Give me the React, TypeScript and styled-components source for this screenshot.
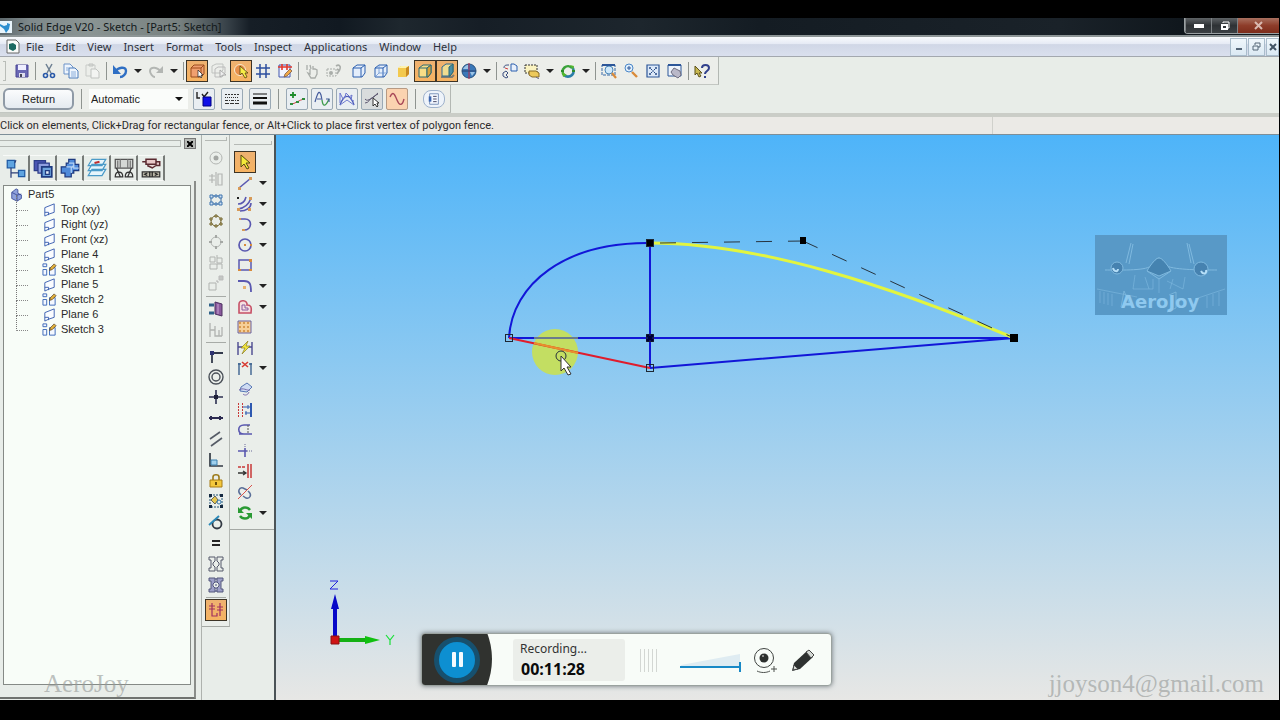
import React from "react";
import styled, { createGlobalStyle, css } from "styled-components";

const UI = `"Noto Sans", "Open Sans", sans-serif`;
const SANS = `"Liberation Sans", Arial, sans-serif`;
const SERIF = `"Liberation Serif", "Times New Roman", serif`;

const Global = createGlobalStyle`
  * { box-sizing: border-box; }
  body { margin: 0; background: #000; overflow: hidden; }
  button { font: inherit; color: inherit; padding: 0; border: 0; background: none; }
  svg { display: block; }
`;

const Screen = styled.div`
  position: relative;
  min-height: 100vh;
  display: flex;
  flex-direction: column;
  padding: 18px 1px 20px 0;
  font-family: ${UI};
  font-size: 11px;
  color: #222;
  background: #000;
`;

const TitleBar = styled.header`
  display: flex;
  align-items: center;
  height: 19px;
  border-bottom: 2px solid #8d9596;
  background: linear-gradient(90deg, #5d686c 0, #7e898b 30px, #8a9493 90px, #77807f 180px, #39434a 226px, #161e26 250px, #111921 340px, #1e272e 400px, #161e26 480px, #1d262d 640px, #141c23 760px, #1a2229 1060px, #10171d 1180px);
`;
const Title = styled.h1`
  flex: 1;
  margin: 0 0 0 6px;
  font-size: 11px;
  line-height: 17px;
  font-weight: 400;
  color: #12181a;
  white-space: nowrap;
`;
const WindowButtons = styled.div`
  display: flex;
  align-self: flex-start;
  height: 16px;
  border: 1px solid #9aa0a2;
  border-top: 0;
  border-right: 0;
  border-radius: 0 0 0 4px;
  overflow: hidden;
`;
const WindowButton = styled.button<{ $close?: boolean }>`
  display: grid;
  place-items: center;
  width: ${(p) => (p.$close ? 42 : 26)}px;
  border-left: 1px solid #7d8285;
  background: ${(p) => (p.$close ? "linear-gradient(#a8705f, #8e3d2a 50%, #7c2c1b)" : "linear-gradient(#5e6366, #2e3235 50%, #3b4043)")};
`;

const MenuBar = styled.nav`
  display: flex;
  align-items: center;
  height: 20px;
  padding-left: 5px;
  border-bottom: 1px solid #a3a8ae;
  background: linear-gradient(#f8fafc, #e6ebf5 35%, #d0d7e6 40%, #dae0ee);
`;
const MenuItem = styled.button`
  padding: 0 6px;
  font-size: 11px;
  line-height: 18px;
  color: #2c313a;
`;
const DocButtons = styled.div`
  display: flex;
  gap: 1px;
  margin-left: auto;
  height: 18px;
`;
const DocButton = styled.button<{ $cut?: boolean }>`
  display: grid;
  place-items: center;
  width: ${(p) => (p.$cut ? 13 : 17)}px;
  overflow: hidden;
  border: 1px solid #a9bccb;
  background: linear-gradient(#f0f7fb, #dbe9f3);
`;

const Strip = styled.div`
  display: flex;
  align-items: center;
  background: #e8ede8;
`;
const ToolRow = styled(Strip)`
  height: 28px;
`;
const ToolSet = styled.div`
  display: flex;
  align-items: center;
  height: 28px;
  padding: 1px 5px 0 3px;
  border-right: 1px solid #b3b8b3;
  border-bottom: 1px solid #c3c7c2;
  background: #eceeea;
`;
const Grip = styled.span`
  width: 3px;
  height: 20px;
  margin-right: 5px;
  border: 1px solid #b9bdb8;
  border-left: 0;
`;
const pressed = css`
  border: 1px solid #3d3426;
  background: linear-gradient(#eeb170, #f6b362);
`;
const ToolButton = styled.button<{ $on?: boolean }>`
  display: grid;
  place-items: center;
  width: 22px;
  height: 22px;
  ${(p) => p.$on && pressed}
`;
const Drop = styled.button`
  width: 14px;
  height: 20px;
  display: grid;
  place-items: center;
  &::after {
    content: "";
    border: 4px solid transparent;
    border-bottom: 0;
    border-top-color: #222;
  }
`;
const Sep = styled.span`
  width: 1px;
  height: 18px;
  margin: 0 2px;
  background: #8f9490;
`;
const Space = styled.span`
  width: 3px;
`;

const ReturnButton = styled.button`
  width: 71px;
  height: 22px;
  border: 2px solid #8f9aa6;
  border-radius: 6px;
  background: linear-gradient(#fbfcfd, #e4eaf0);
  font-family: ${SANS};
  font-size: 11px;
  color: #222;
`;
const StyleSelect = styled.select`
  width: 99px;
  height: 20px;
  padding: 0 0 0 2px;
  border: 0;
  border-radius: 0;
  appearance: none;
  font-family: ${SANS};
  font-size: 11px;
  color: #222;
  background: #fafcfa;
`;
const SelectWrap = styled.label`
  position: relative;
  display: flex;
  margin-right: 5px;
  &::after {
    content: "";
    position: absolute;
    right: 5px;
    top: 8px;
    border: 4px solid transparent;
    border-bottom: 0;
    border-top-color: #111;
    pointer-events: none;
  }
`;
const BoxRow = styled.div<{ $gap: number }>`
  display: flex;
  gap: ${(p) => p.$gap}px;
`;
const BoxButton = styled.button<{ $tone?: "gray" | "orange" | "round" }>`
  display: grid;
  place-items: center;
  width: 22px;
  height: 22px;
  border: 1px solid #9aa9b5;
  border-radius: 2px;
  background: #e9eef2;
  ${(p) => p.$tone === "gray" && "background: #d9dcdd;"}
  ${(p) => p.$tone === "orange" && "background: #fbd3b0; border-color: #b79a83;"}
  ${(p) => p.$tone === "round" && "border-radius: 8px; height: 18px; background: #eef3fa; border-color: #9fb2cc;"}
`;
const ToolSep = styled.span`
  width: 1px;
  height: 20px;
  margin: 0 7px;
  background: #8f9490;
`;

const Prompt = styled.p`
  display: flex;
  margin: 0;
  height: 22px;
  border-top: 4px solid #cacdc7;
  border-bottom: 1px solid #7d8e98;
  background: #ebeae6;
  font-family: Roboto, ${UI};
  line-height: 17px;
  font-size: 11px;
  color: #2b2b2b;
  white-space: nowrap;
  span { flex: 1; }
  &::after {
    content: "";
    width: 286px;
    border-left: 1px solid #d0d1cc;
  }
`;

const Work = styled.main`
  flex: 1;
  display: flex;
  background: #e8ede9;
`;
const EdgeBar = styled.aside`
  width: 202px;
  padding-right: 5px;
  display: flex;
  flex-direction: column;
  border-right: 1px solid #aeb2ae;
`;
const EdgeHead = styled.div`
  display: flex;
  align-items: center;
  gap: 3px;
  height: 17px;
  &::before {
    content: "";
    flex: 1;
    height: 5px;
    border: 1px solid #b2b6b2;
    border-left: 0;
  }
`;
const CloseBox = styled.button`
  width: 12px;
  height: 11px;
  display: grid;
  place-items: center;
  background: #b7bab6;
  border: 1px solid #777;
`;
const Tabs = styled.div`
  display: flex;
  padding: 3px 0 0 3px;
`;
const Tab = styled.button<{ $on?: boolean }>`
  display: grid;
  place-items: center;
  width: 27px;
  height: 26px;
  border-top: 1px solid #f8faf8;
  border-right: 2px solid #777b78;
  border-bottom: ${(p) => (p.$on ? "0" : "1px solid #f8faf8")};
`;
const TabPanel = styled.section`
  flex: 1;
  display: flex;
  margin-bottom: 1px;
  padding: 4px 3px 12px 3px;
  border-right: 2px solid #8a8d8a;
  border-bottom: 2px solid #6f726f;
`;
const Tree = styled.ul`
  flex: 1;
  margin: 0;
  padding: 1px 0 0 6px;
  list-style: none;
  border: 1px solid #858a86;
  background: #f8fdf8;
  font-family: ${SANS};
  font-size: 11px;
  line-height: 15px;
  color: #2a2a2a;
  ul { margin: 0; padding: 0; list-style: none; }
`;
const TreeRoot = styled.div`
  display: flex;
  align-items: center;
  gap: 4px;
  height: 15px;
`;
const TreeItem = styled.li`
  position: relative;
  display: flex;
  align-items: center;
  gap: 4px;
  height: 15px;
  padding-left: 32px;
  &::before {
    content: "";
    position: absolute;
    left: 6px;
    top: -7px;
    width: 11px;
    height: 15px;
    border-left: 1px dotted #777;
    border-bottom: 1px dotted #888;
  }
`;

const Palette = styled.div<{ $wide?: boolean }>`
  align-self: flex-start;
  display: flex;
  flex-direction: column;
  width: ${(p) => (p.$wide ? 44 : 28)}px;
  height: ${(p) => (p.$wide ? 395 : 492)}px;
  padding: ${(p) => (p.$wide ? "6px 2px 6px 4px" : "2px 2px 5px 3px")};
  border-right: ${(p) => (p.$wide ? 0 : 1)}px solid #b3b7b3;
  border-bottom: 1px solid #a5a9a5;
  background: #eaeeea;
  &::before {
    content: "";
    height: 3px;
    margin-bottom: 7px;
    border: 1px solid #b5b9b5;
    border-left: 0;
    border-top: 0;
  }
`;
const PaletteRow = styled.div`
  flex: 1;
  min-height: 0;
  display: flex;
  align-items: center;
`;
const PaletteSep = styled.span`
  height: 1px;
  margin: 2px 1px;
  background: #a7aba7;
`;

const Canvas = styled.section`
  position: relative;
  flex: 1;
  overflow: hidden;
  border-left: 2px solid #4b5357;
  background: linear-gradient(#4eb4f9, #e7e7e5);
`;
const Drawing = styled.svg`
  position: absolute;
  left: 0;
  top: 0;
`;
const Logo = styled.div`
  position: absolute;
  right: 52px;
  top: 100px;
  width: 132px;
  height: 80px;
  background: #5899c7;
`;
const LogoText = styled.span`
  position: absolute;
  left: 26px;
  bottom: 3px;
  font-family: "DejaVu Sans", sans-serif;
  font-weight: 700;
  font-size: 18px;
  line-height: 20px;
  color: #8fc9ef;
`;
const Axis = styled.div`
  position: absolute;
  left: 52px;
  bottom: 50px;
`;

const Recorder = styled.div`
  position: absolute;
  left: 145px;
  bottom: 14px;
  display: flex;
  align-items: center;
  width: 411px;
  height: 53px;
  border: 1px solid #9aa29f;
  border-radius: 4px;
  background: #f8fcf8;
  box-shadow: 0 0 5px #6d7579;
  overflow: hidden;
`;
const RecordLeft = styled.div`
  display: flex;
  align-items: center;
  width: 70px;
  height: 53px;
  padding-left: 12px;
  background: #30322f;
  clip-path: circle(72px at -2px 26px);
`;
const Pause = styled.button`
  display: flex;
  justify-content: center;
  align-items: center;
  gap: 3px;
  width: 46px;
  height: 46px;
  border: 5px solid #17506e;
  border-radius: 50%;
  background: #0d8fd1;
  i { width: 4px; height: 15px; background: #f4fbff; border-radius: 1px; }
`;
const RecordInfo = styled.div`
  width: 112px;
  height: 42px;
  margin-left: 21px;
  padding: 1px 7px;
  border-radius: 3px;
  background: #ebeeea;
  white-space: nowrap;
`;
const RecordLabel = styled.div`
  font-size: 12px;
  line-height: 17px;
  color: #333;
`;
const RecordTime = styled.div`
  margin-left: 1px;
  font-family: "Open Sans", ${UI};
  font-size: 16px;
  line-height: 24px;
  font-weight: 700;
  color: #0a0a0a;
`;
const Mark = styled.div<{ $right?: boolean }>`
  position: absolute;
  bottom: 22px;
  ${(p) => (p.$right ? "right: 16px;" : "left: 44px;")}
  font-family: ${SERIF};
  font-size: 25px;
  line-height: 28px;
  color: rgba(150, 154, 152, 0.62);
`;

const B = "#2b5fae";
const P = "#5a58b0";
const G = "#a9ada9";
const cube = "M2 5l4-3h8v8l-3 4H2zM2 5h8v9M10 5l4-3";
const bracket = "M1 1h6v4L5 7v2l2 2v4H1v-3h2V4H1zM15 1H9v4l2 2v2l-2 2v4h6v-3h-2V4h2z";

const ICONS: Record<string, React.ReactNode> = {
  save: <><path d="M2 2h12v12H2z" fill="#6a68b4" stroke="#4a4795" /><path d="M4 2h8v5H4z" fill="#eef" /><path d="M5 10h6v4H5z" fill="#dde" /><path d="M6 11h2v3H6z" fill="#445" /></>,
  cut: <><path d="M5 1l5 9M11 1L6 10" stroke="#6d7f92" strokeWidth="1.5" /><circle cx="4.5" cy="12.5" r="2" stroke="#2858a8" strokeWidth="1.6" /><circle cx="11.5" cy="12.5" r="2" stroke="#2858a8" strokeWidth="1.6" /></>,
  copy: <><path d="M1 1h6l3 3v7H1z" fill="#eef5fd" stroke="#6d93c8" /><path d="M6 5h6l3 3v7H6z" fill="#eef5fd" stroke="#4d7cba" /><path d="M8 9h5M8 11h5M8 13h5M3 5h3M3 7h3" stroke="#8aaedb" /></>,
  paste: <><path d="M1 2h9v11H1z" stroke="#c8cbc8" /><path d="M4 1h4v2H4z" stroke="#c0c3c0" /><path d="M6 6h5l3 3v6H6z" fill="#f3f4f2" stroke="#c0c3c0" /></>,
  undo: <><path d="M3 9c3-5 11-6 11-1 0 3-3 6-6 6" stroke="#2f6fc4" strokeWidth="2.4" /><path d="M1 2v9h8z" fill="#2f6fc4" /></>,
  redo: <><path d="M13 9C10 4 2 3 2 8c0 3 3 6 5 6" stroke="#b3b6b3" strokeWidth="2" /><path d="M15 3v7H8z" fill="#b3b6b3" /></>,
  selbox: <><path d="M2 5l3-3h10v9l-3 3H2z" fill="#f0a070" stroke="#9b4c1e" /><path d="M2 5h10v9M12 5l3-3" stroke="#a04a18" /><path d="M9 7v7l2-1 1 2 1-1-1-2h2z" fill="#fff" stroke="#222" strokeWidth=".7" /></>,
  ghostbox: <><path d="M1 3l4-2h7v6l-3 3H1z" stroke="#c0c3c0" /><path d="M4 6l3-2h7v6l-3 4H4z" stroke="#bbb" /><path d="M9 7v7l3-2h3z" fill="#eee" stroke="#aaa" /></>,
  spark: <><circle cx="7" cy="7" r="5.500" stroke="#f7ead0" fill="#e78f4a" /><path d="M7 3v9l2-2 3 5 2-1-2-4h3z" fill="#f6ed48" stroke="#54430e" strokeWidth=".8" /></>,
  grid: <path d="M5 1v14M11 1v14M1 5h14M1 11h14" stroke="#2d4f9e" strokeWidth="1.5" />,
  calpen: <><path d="M2 2h11v12H2z" fill="#f3f5ff" stroke="#4356ae" /><path d="M1 4h14M5 1v6M10 1v6" stroke="#e0392e" strokeWidth="1.6" /><path d="M7 14l1-3 5-5 2 2-5 5z" fill="#f0a848" stroke="#7c5c48" strokeWidth=".8" /></>,
  hand: <path d="M3 2v5M6 6v5l-2-1 3 5h4l2-4V7l-2-1-2 0V3M6 2l1 4" stroke={G} strokeWidth="1.3" />,
  camera: <><path d="M1 6h9v7H1z" stroke={G} strokeDasharray="2 1" /><circle cx="5" cy="10" r="2" fill={G} /><path d="M10 3c3-2 5 0 4 3l-3 5M11 6l3 2" stroke={G} strokeWidth="1.6" /></>,
  wire: <path d={cube} stroke={B} fill="#e4eefb" />,
  wire2: <><path d={cube} stroke={B} fill="#e4eefb" /><path d="M6 2v8l-4 4M6 10h8" stroke="#6b96d2" strokeWidth=".8" /></>,
  shade: <><path d="M3 5l3-2h8v8l-3 3H3z" fill="#f3c94d" /><path d="M3 5l3-2h8l-3 2z" fill="#fdf2ae" /><path d="M11 5l3-2v8l-3 3z" fill="#c98a20" /></>,
  shadeOn: <><path d={cube} fill="#f8dd86" stroke="#2c6a74" /><path d="M10 5l4-3v8l-3 4h-1z" fill="#d8a23a" stroke="#2c6a74" /></>,
  shadeOn2: <><path d="M2 14h11l2-2" stroke="#7d7b71" strokeWidth="2" /><path d="M3 4l4-3h7v8l-3 4H3z" fill="#f0dc90" stroke="#2c6a94" /><path d="M10 4l4-3v8l-3 4h-1z" fill="#4a8ea6" stroke="#2c6a74" /></>,
  globe: <><circle cx="8" cy="8" r="7" fill="#3a78b8" stroke="#28527e" /><path d="M2 6c2-4 5-4 5-4v4zM9 9h5l-3 4z" fill="#9cc4e6" /><path d="M8 0v16" stroke="#c02848" /><path d="M1 8h14" stroke="#28406e" /></>,
  swap: <><path d="M9 1h3l3 2v5H9z" stroke={B} fill="#e8f0fb" /><path d="M2 5c0-3 2-3 5-3M1 10l3-2 2 2-2 2 2 2-2 1-3-2z" stroke="#3b4f80" /><path d="M3 5l3 1" stroke="#d04040" /></>,
  tagsel: <><path d="M1 2h12v8H1z" stroke="#333" strokeDasharray="2 1" fill="#faf3c0" /><path d="M5 8h7l3 2v4H8L5 12z" fill="#edc95a" stroke="#876a28" /><path d="M12 14l3 2" stroke="#668" /></>,
  ring: <><path d="M4 12a5 5 0 018-7" stroke="#3aa33a" strokeWidth="2.6" /><path d="M12 4a5 5 0 01-8 8" stroke="#2c7ea8" strokeWidth="2.6" /><path d="M10 2l4 1-1 4zM2 9l1 5 4-2z" fill="#54b82c" /><path d="M1 8h3M12 8h3" stroke="#2d8c2d" strokeWidth="2" /></>,
  zoomArea: <><path d="M1 2h13v10H1z" stroke="#3568a8" strokeDasharray="3 1" /><circle cx="8" cy="7" r="4" fill="#cfe8fa" stroke="#4a86b8" /><path d="M11 10l4 5" stroke="#d98b3a" strokeWidth="2.2" /><path d="M1 2h13" stroke="#2c5698" strokeWidth="2" /></>,
  zoom: <><circle cx="6" cy="5" r="4" fill="#e0effc" stroke="#4a86c8" /><path d="M6 3v4M4 5h4" stroke="#2c5698" /><path d="M9 9l5 5" stroke="#d98b3a" strokeWidth="2.4" /></>,
  fit: <><path d="M2 2h12v12H2z" fill="#dbe8f8" stroke="#2c5698" strokeWidth="1.2" /><path d="M4 5h2M5 4v2M10 5h2M11 4v2M4 11h2M5 10v2M10 11h2M11 10v2M7 8h2M6 6l1 1M10 6L9 7M6 10l1-1M10 10L9 9" stroke="#274a84" /></>,
  pan: <><path d="M1 2h13v11H1z" fill="#edf3fb" stroke="#2c5698" /><path d="M1 2h13" stroke="#2c5698" strokeWidth="2" /><path d="M4 9l3-4 6 3 1 4-3 3-5-3z" fill="#b9b8c8" stroke="#6d6d80" /></>,
  help: <><path d="M1 3v9l2-2 2 4 2-1-2-3h3z" fill="#c8b850" stroke="#5d531c" /><path d="M8 5c0-4 7-4 7 0 0 3-4 3-4 6M11 13v2" stroke="#31408c" strokeWidth="2" /></>,
  layer: <><path d="M1 1v6h3M6 3l3 4M12 1l-4 5" stroke="#222" strokeWidth="1.4" /><path d="M7 6h8v9H7z" fill="#1010e8" stroke="#000080" /></>,
  dashes: <><path d="M1 3.500h14" stroke="#333" strokeDasharray="2 1" /><path d="M1 6.500h14" stroke="#333" strokeDasharray="1 1" /><path d="M1 9.500h14" stroke="#333" strokeDasharray="3 1 1 1" /><path d="M1 12.500h14" stroke="#333" strokeDasharray="4 1" /></>,
  lines: <><path d="M1 3h14" stroke="#111" /><path d="M1 7h14" stroke="#111" strokeWidth="2" /><path d="M1 12h14" stroke="#111" strokeWidth="3" /></>,
  addpt: <><path d="M4 1v6M1 4h6" stroke="#1e8c2c" strokeWidth="1.8" /><path d="M2 13c4 0 8-4 13-5" stroke="#c44" /><path d="M1 12h3v2H1zM7 10h3v2H7zM13 7h3v2h-3z" fill="#2f8c3c" /></>,
  curveA: <><path d="M8 9c1 8 4 6 7-1" stroke="#3c9a4a" strokeWidth="1.3" /><path d="M1 11C4 1 5-1 7 4l1 5M3 8l4 0M12 8h3v3" stroke="#445b9c" strokeWidth="1.2" /></>,
  comb: <><path d="M1 14C5 3 11 2 15 14" stroke="#4c5cb8" strokeWidth="1.4" /><path d="M4 8L1 2v10M4 8l3-4M6 6l1-4 4 4M10 6l3-2-1 5 3 1M1 14l7-5 7 5" stroke="#6d78d0" /></>,
  curveSel: <><path d="M1 12c4 0 4-4 7-5s3-3 6-5M1 8c3 4 8-3 13-5" stroke="#5c5670" /><path d="M9 7v8l2-2 2 3 1-1-1-3h2z" fill="#fff" stroke="#333" /></>,
  wave: <path d="M1 6C4-1 6 4 8 9s5 7 7-1" stroke="#a84858" strokeWidth="1.4" />,
  list: <><path d="M3 2h10v12H3z" fill="#f4f8ff" stroke="#7089b4" /><path d="M7 5h4M7 8h4M7 11h4" stroke="#335" /><path d="M2 5h3v6H2z" fill="#3c66b0" /></>,
  part: <><path d="M2 5l5-4 2 1v4l4 2v4l-5 3-6-3z" fill="#8fa2dc" stroke="#3b4c98" /><path d="M8 8v7M2 5l6 3 5-1" stroke="#3b4c98" /></>,
  plane: <path d="M3 6l10-4v9l-6 2-4 2zM3 11h4v3" stroke="#3b5fb0" fill="#fafcff" />,
  sketch: <><path d="M1 2h4v3H1zM1 8h4v6H1zM8 6h6v8H8z" stroke="#3b68b8" fill="#f4f8ff" /><path d="M8 9l1-3 4-4 2 2-4 4z" fill="#e3b23a" stroke="#5b4220" strokeWidth=".8" /></>,
  circ2g: <><circle cx="8" cy="8" r="6" stroke="#b3b6b3" /><circle cx="8" cy="8" r="2.5" fill="#a3a6a3" /></>,
  mirrorg: <path d="M1 5h6M1 9h6M4 3v9M8 1v14M10 3h4v11h-4z" stroke="#b3b6b3" strokeWidth="1.2" />,
  rectpat: <><path d="M3 4h10v8H3z" stroke="#3a6aa0" /><path d="M2 3h3v3H2zM7 3h2v2H7zM11 3h3v3h-3zM2 10h3v3H2zM7 11h2v2H7zM11 10h3v3h-3z" fill="#cfe0f2" stroke="#3f74ae" /></>,
  circpat: <><circle cx="8" cy="8" r="5" stroke="#7a6a30" /><path d="M7 2h2v2H7zM7 12h2v2H7zM2 5h2v2H2zM12 5h2v2h-2zM2 10h2v2H2zM12 10h2v2h-2z" fill="#f4edc0" stroke="#6d5e28" /></>,
  circg: <><circle cx="8" cy="8" r="5" stroke="#b0b3b0" /><path d="M8 1v3M8 12v3M1 8h3M12 8h3" stroke="#a5a8a5" strokeWidth="2" /></>,
  movg: <path d="M2 3h5v5H2zM9 1v8h5V4H9M2 10h7v5H2zM9 10h5v5" stroke="#b0b3b0" />,
  scaleg: <><path d="M1 8h7v7H1z" stroke="#b0b3b0" /><path d="M11 1h4v4h-4zM8 6h2v2" stroke="#bbb" fill="#c4c7c4" /></>,
  stretch: <><path d="M7 1l7 2v12l-7-2z" fill="#8a5a9c" stroke="#4d3060" /><path d="M1 4h5M1 12h5" stroke="#2e6088" strokeWidth="3" /><path d="M10 3v10" stroke="#c9a6d4" /></>,
  dimg: <path d="M2 1v14M2 8h5M7 4v10h7M11 8v6M14 5v9" stroke="#b0b3b0" strokeWidth="1.3" />,
  connect: <><path d="M4 15V5h11" stroke="#333a4c" strokeWidth="1.8" /><path d="M2 3h4v4H2z" fill="#2c3170" /></>,
  concentric: <><circle cx="8" cy="8" r="7" stroke="#4a5058" strokeWidth="1.4" /><circle cx="8" cy="8" r="4" stroke="#4a5058" strokeWidth="1.4" /></>,
  hv: <><path d="M8 1v14M1 8h14" stroke="#2c2f50" strokeWidth="1.6" /><path d="M6 6h4v4H6z" fill="#1e2038" /></>,
  collin: <path d="M1 8h14M3 6v4M12 6v4M4 7v2M13 7v2" stroke="#2c2a50" strokeWidth="2" />,
  parallel: <><path d="M2 8l10-7" stroke="#555b66" strokeWidth="1.6" /><path d="M3 15l11-8" stroke="#555b66" strokeWidth="1.6" /></>,
  perp: <><path d="M2 1v13h13" stroke="#333a44" strokeWidth="1.7" /><path d="M3 8h6v5H3z" fill="#9fd0ee" stroke="#3b80b0" /></>,
  lock: <><path d="M5 7V4c0-3 6-3 6 0v3" stroke="#9c7a18" strokeWidth="1.6" /><path d="M2 7h12v7H2z" fill="#f4c83c" stroke="#a87c14" /><path d="M8 9v3" stroke="#6b4e08" strokeWidth="2" /></>,
  rigid: <><path d="M2 2h12v12H2z" stroke="#257" strokeDasharray="2 1" /><path d="M1 1h3v3H1zM12 1h3v3h-3zM1 12h3v3H1zM12 12h3v3h-3z" fill="#142840" /><path d="M3 7l4-4 3 4-3 4z" fill="#e8c850" stroke="#665" /><circle cx="11" cy="9" r="2" stroke="#37a" /></>,
  tangent: <><circle cx="9" cy="10" r="4.5" stroke="#333a44" strokeWidth="1.8" /><path d="M1 11L11 2" stroke="#2b88b8" strokeWidth="1.8" /></>,
  equal: <path d="M4 6h8M4 10h8" stroke="#222" strokeWidth="2.2" />,
  sym: <path d={bracket} stroke="#55586a" />,
  symax: <><path d={bracket} fill="#9d9fc8" stroke="#55587c" /><path d="M8 1v14" stroke="#44487c" strokeDasharray="2 1" /></>,
  rel: <path d="M4 1v13h5v-3M1 4h6M1 7h6M12 1v13M9 5h6M9 8h6" stroke="#a03060" strokeWidth="1.2" />,
  arrow: <path d="M4 1v12l3-3 3 5 2-1-3-5h4z" fill="#f4ea3a" stroke="#554a10" />,
  line: <><path d="M2 13L14 3" stroke={P} strokeWidth="1.6" /><path d="M1 12h3v3H1zM12 2h3v3h-3z" fill="#d79a58" /></>,
  curve: <><path d="M1 13C8 12 12 8 14 2M1 8c5 0 7-3 8-7M3 15c6 0 11-3 11-8" stroke={P} strokeWidth="1.6" /><path d="M0 12h3v3H0zM12 1h3v3h-3zM11 12h3v3h-3z" fill="#d79a58" /><path d="M0 1h2v2H0z" fill="#222" /></>,
  arc: <><path d="M3 3h5c8 0 7 11-1 11" stroke={P} strokeWidth="1.7" /><path d="M2 2h2v2H2zM5 13h3v2H5z" fill="#d79a58" /></>,
  circle: <><circle cx="8" cy="8" r="6" stroke={P} strokeWidth="1.7" /><path d="M7 7h2v2H7zM13 7h2v2h-2z" fill="#d88a3a" /></>,
  rect: <><path d="M2 3h12v10H2z" stroke={P} strokeWidth="1.5" /><path d="M1 12h3v2H1zM12 2h3v3h-3zM12 12h3v2h-3z" fill="#d88a3a" /></>,
  fillet: <><path d="M1 3h6c6 0 7 3 7 11" stroke={P} strokeWidth="1.8" /><path d="M6 8h3v3H6z" fill="#e6b070" /></>,
  offset: <><path d="M2 14V5c0-5 9-4 8 1 4 0 5 2 4 8z" stroke="#c65066" strokeWidth="1.6" fill="#f6dfe0" /><path d="M5 11V6h3v3h3v2z" stroke="#8a5ca0" /></>,
  fill: <><path d="M1 2h13v12H1z" fill="#f6cf98" stroke="#6b62a0" /><path d="M2 4h11M2 8h11M2 12h11" stroke="#d99a50" strokeDasharray="2 2" strokeWidth="2" /></>,
  smart: <><path d="M1 2v13M15 2v13M1 7h14" stroke="#4c4a90" strokeWidth="1.4" /><path d="M11 1L4 8h4l-3 6 8-8H9z" fill="#f1e640" stroke="#8a7c1c" strokeWidth=".7" /></>,
  dist: <><path d="M2 3v12M14 3v12M1 4h3M12 4h3" stroke="#3d6390" strokeWidth="1.4" /><path d="M5 2l6 5M11 2L5 7" stroke="#d83a32" strokeWidth="1.6" /></>,
  convert: <><path d="M4 6l6-4 5 4-5 5-7-1z" fill="#cfdcf2" stroke="#5676b4" /><path d="M2 9c4-3 8 1 11 0M6 13c2 2 5 1 6-2" stroke="#7a6cae" /></>,
  trim: <><path d="M1.500 1v14M5.500 1v14" stroke="#c83838" strokeDasharray="2 1" /><path d="M14 1v14" stroke="#2d58b0" strokeWidth="2" /><path d="M6 5h7M8 11h6M11 3v4M9 9v4" stroke="#2d58b0" /></>,
  symrel: <><path d="M13 3H7c-7 0-7 9 0 9h8M2 12h4" stroke={P} strokeWidth="1.6" /><path d="M11 3v9" stroke="#555" strokeDasharray="2 1" /></>,
  extend: <><path d="M1 8h9M8 5v9" stroke={P} strokeWidth="1.6" /><path d="M10 8h5M8 1v4" stroke="#6a6a9a" strokeDasharray="1 1" /></>,
  align: <><path d="M11 1v14M14 1v14" stroke="#c83838" strokeWidth="1.5" /><path d="M1 4h8" stroke="#c83838" strokeDasharray="3 1" strokeWidth="1.6" /><path d="M1 10h8M6 8l3 2-3 2" stroke="#333" strokeWidth="1.3" /></>,
  del: <><path d="M4 11c-4-3-2-8 2-7l4 2M6 12l3 2c4 1 6-3 3-6l-1-1" stroke="#5a6e98" strokeWidth="1.5" /><path d="M1 15L15 1" stroke="#d8514a" /></>,
  refresh: <><path d="M3 6c2-5 8-4 10-1M13 10c-2 5-8 4-10 1" stroke="#2a9a34" strokeWidth="2.4" /><path d="M1 2v6h6zM15 14V8H9z" fill="#2a9a34" /></>,
  tabTree: <><path d="M1 1h6v6H1zM10 9h5v5h-5z" fill="#5fa4e0" stroke="#1f5aa4" /><path d="M7 3l1-2M4 7v8M4 11h6" stroke="#2c3f78" /></>,
  tabLib: <><path d="M1 2h9v8H1z" fill="#4b56b4" stroke="#2b3c88" /><path d="M4 4h9v8H4z" fill="#8f9fe0" stroke="#2b3c88" /><path d="M7 7h8v8H7z" fill="#6fa4dc" stroke="#1e3a80" strokeWidth="1.4" /><path d="M10 10h3v3h-3z" fill="#e4effa" stroke="#1e3a80" /></>,
  tabFam: <><path d="M7 1h5v4h3v5h-4v2H9v3H4v-3H1V7h4V4h2z" fill="#4f8ada" stroke="#1e3a80" /><path d="M5 7h4v5M7 4h4v4h4M9 8l2-2" stroke="#b4d2f4" /></>,
  tabLay: <><path d="M4 1h11l-3 5H1zM4 5h11l-3 5H1zM4 9h11l-3 5H1z" fill="#e6f5fc" stroke="#4a9ac8" /><path d="M6 4l4-1" stroke="#c03030" strokeWidth="1.5" /></>,
  tabSen: <><path d="M1 1h14v7H1z" fill="#d5d8d5" stroke="#555" /><path d="M5 1v7M11 1v7M3 2v6M13 2v6" stroke="#777" /><path d="M1 15c0-5 6-5 6 0zM9 15c0-5 6-5 6 0zM2 8l3 7M14 8l-3 7" stroke="#333" /></>,
  tabPlay: <><path d="M4 1h8v4H4zM1 3h3M12 3h3v3h-3M5 6l4 2 3-2" stroke="#5a2a30" strokeWidth="1.2" fill="#e8c8c8" /><path d="M1 11h14v4H1z" fill="#bbb8a8" stroke="#333" /><path d="M5 12l-2 1 2 1M11 12l2 1-2 1M7 11v4M9 11v4" stroke="#222" /></>,
};

const Icon = ({ name, size = 16 }: { name: string; size?: number }) => (
  <svg width={size} height={size} viewBox="0 0 16 16" fill="none" aria-hidden="true">
    {ICONS[name]}
  </svg>
);

const PRESSED = new Set(["selbox", "spark", "shadeOn", "shadeOn2", "arrow", "rel"]);
const MAIN_TOOLS = "save | cut copy paste | undo v redo v | selbox ghostbox spark grid calpen | hand camera _ wire wire2 shade shadeOn shadeOn2 globe v | swap tagsel v ring v | zoomArea zoom fit pan | help".split(" ");
const RELATIONS = "circ2g mirrorg rectpat circpat circg movg scaleg | stretch dimg | connect concentric hv collin parallel perp lock rigid tangent equal sym symax | rel".split(" ");
const DRAW: [string, boolean?][] = [
  ["arrow"], ["line", true], ["curve", true], ["arc", true], ["circle", true], ["rect"], ["fillet", true], ["offset", true], ["fill"],
  ["smart"], ["dist", true], ["convert"], ["trim"], ["symrel"], ["extend"], ["align"], ["del"], ["refresh", true],
];
const MENUS = ["File", "Edit", "View", "Insert", "Format", "Tools", "Inspect", "Applications", "Window", "Help"];
const TREE = ["Top (xy)", "Right (yz)", "Front (xz)", "Plane 4", "Sketch 1", "Plane 5", "Sketch 2", "Plane 6", "Sketch 3"];
const TABS = ["tabTree", "tabLib", "tabFam", "tabLay", "tabSen", "tabPlay"];

const Handle = ({ x, y, solid }: { x: number; y: number; solid?: boolean }) => (
  <rect x={x - 3.5} y={y - 3.5} width="7" height="7" fill={solid ? "#000" : "none"} stroke="#1d2733" />
);

export default function App() {
  return (
    <Screen>
      <Global />
      <TitleBar>
        <svg width="12" height="14" viewBox="0 0 12 14" aria-hidden="true">
          <path d="M0 1h12v12H0z" fill="#e9f5fc" />
          <path d="M0 4l4 2 3-1V3l3 1-1 5-3 4-2-4-4-3z" fill="#2c8fd0" />
        </svg>
        <Title>Solid Edge V20 - Sketch - [Part5: Sketch]</Title>
        <WindowButtons>
          <WindowButton aria-label="Minimize"><svg width="10" height="4"><path d="M0 0h10v4H0z" fill="#fff" /></svg></WindowButton>
          <WindowButton aria-label="Restore"><svg width="10" height="10" fill="none" stroke="#fff"><path d="M3 2V1h6v6H8" /><path d="M2 4h5v4H2z" strokeWidth="2" /></svg></WindowButton>
          <WindowButton $close aria-label="Close"><svg width="10" height="9" stroke="#d9b9b0" strokeWidth="2"><path d="M1 1l7 7M8 1L1 8" /></svg></WindowButton>
        </WindowButtons>
      </TitleBar>

      <MenuBar>
        <svg width="15" height="15" viewBox="0 0 15 15" aria-hidden="true">
          <path d="M2 1h9l3 3v10H2z" fill="#fafcfa" stroke="#666" />
          <path d="M4 5l4-1 3 2v4l-3 2-4-2z" fill="#1c6a62" />
        </svg>
        {MENUS.map((m) => <MenuItem key={m}>{m}</MenuItem>)}
        <DocButtons>
          <DocButton aria-label="Minimize document"><svg width="7" height="8"><path d="M1 5h6v2H1z" fill="#567" /></svg></DocButton>
          <DocButton aria-label="Restore document"><svg width="9" height="9" fill="none" stroke="#567"><path d="M3 3V1h5v4H6M1 4h5v4H1z" /></svg></DocButton>
          <DocButton $cut aria-label="Close document"><svg width="8" height="8" stroke="#456" strokeWidth="2"><path d="M1 1l6 6M7 1L1 7" /></svg></DocButton>
        </DocButtons>
      </MenuBar>

      <ToolRow>
        <ToolSet>
          <Grip />
          {MAIN_TOOLS.map((t, i) =>
            t === "|" ? <Sep key={i} /> : t === "_" ? <Space key={i} /> : t === "v" ? <Drop key={i} aria-label="More" /> : (
              <ToolButton key={i} $on={PRESSED.has(t)} aria-label={t}><Icon name={t} /></ToolButton>
            ))}
        </ToolSet>
      </ToolRow>
      <ToolRow>
        <ToolSet>
          <ReturnButton>Return</ReturnButton>
          <ToolSep />
          <SelectWrap>
            <StyleSelect aria-label="Line style" defaultValue="Automatic"><option>Automatic</option></StyleSelect>
          </SelectWrap>
          <BoxRow $gap={6}>
            {["layer", "dashes", "lines"].map((n) => <BoxButton key={n} aria-label={n}><Icon name={n} /></BoxButton>)}
          </BoxRow>
          <ToolSep />
          <BoxRow $gap={3}>
            {["addpt", "curveA", "comb"].map((n) => <BoxButton key={n} aria-label={n}><Icon name={n} /></BoxButton>)}
            <BoxButton $tone="gray" aria-label="curveSel"><Icon name="curveSel" /></BoxButton>
            <BoxButton $tone="orange" aria-label="wave"><Icon name="wave" /></BoxButton>
          </BoxRow>
          <ToolSep />
          <BoxButton $tone="round" aria-label="Options"><Icon name="list" size={14} /></BoxButton>
        </ToolSet>
      </ToolRow>
      <Prompt><span>Click on elements, Click+Drag for rectangular fence, or Alt+Click to place first vertex of polygon fence.</span></Prompt>

      <Work>
        <EdgeBar>
          <EdgeHead>
            <CloseBox aria-label="Close EdgeBar"><svg width="6" height="6" stroke="#000" strokeWidth="2"><path d="M0 0l6 6M6 0L0 6" /></svg></CloseBox>
          </EdgeHead>
          <Tabs>
            {TABS.map((t, i) => <Tab key={t} $on={i === 0} aria-label={t}><Icon name={t} size={20} /></Tab>)}
          </Tabs>
          <TabPanel>
            <Tree>
              <li>
                <TreeRoot><Icon name="part" size={14} />Part5</TreeRoot>
                <ul>
                  {TREE.map((t) => (
                    <TreeItem key={t}><Icon name={t.startsWith("Sketch") ? "sketch" : "plane"} size={15} />{t}</TreeItem>
                  ))}
                </ul>
              </li>
            </Tree>
          </TabPanel>
        </EdgeBar>

        <Palette>
          {RELATIONS.map((t, i) => t === "|" ? <PaletteSep key={i} /> : (
            <PaletteRow key={i}><ToolButton $on={PRESSED.has(t)} aria-label={t}><Icon name={t} /></ToolButton></PaletteRow>
          ))}
        </Palette>
        <Palette $wide>
          {DRAW.map(([t, more]) => (
            <PaletteRow key={t}>
              <ToolButton $on={PRESSED.has(t)} aria-label={t}><Icon name={t} /></ToolButton>
              {more && <Drop aria-label={`${t} options`} />}
            </PaletteRow>
          ))}
        </Palette>

        <Canvas>
          <Drawing width="1003" height="565" viewBox="276 135 1003 565" fill="none" aria-label="Airfoil sketch">
            <circle cx="555" cy="352" r="23" fill="#c3de62" />
            <g stroke="#1216d8" strokeWidth="2">
              <path d="M509 338C512 284 565 242 650 243" />
              <path d="M650 243V368M650 368L1014 338M578 338H1014M509 338H534" />
            </g>
            <path d="M534 338H578" stroke="#6b7c8c" strokeWidth="2" />
            <path d="M509 338L650 368" stroke="#e01c2c" strokeWidth="2" />
            <path d="M534 343L578 353" stroke="#e8902c" strokeWidth="2" />
            <path d="M650 243C760 243 890 286 1014 338" stroke="#e2f540" strokeWidth="3" />
            <path d="M660 243L803 241" stroke="#27343f" strokeDasharray="16 16" />
            <path d="M803 241L1014 338" stroke="#27343f" strokeDasharray="16 16" />
            <Handle x={650} y={243} solid />
            <Handle x={509} y={338} />
            <Handle x={650} y={368} />
            <Handle x={650} y={338} />
            <path d="M647 335l6 6M653 335l-6 6" stroke="#000030" strokeWidth="3" />
            <path d="M800 237h6v7h-6zM1010 334h8v8h-8z" fill="#000" />
            <circle cx="561" cy="356" r="5" stroke="#26303a" />
            <path d="M561 356v15l3-3 4 7 3-1-4-7h4z" fill="#fff" stroke="#333" />
          </Drawing>

          <Logo>
            <svg width="132" height="80" viewBox="0 0 132 80" fill="none" stroke="#7fb9df" aria-hidden="true">
              <path d="M36 8l-5 20M38 9l-4 20M92 8l4 20M94 9l5 20" />
              <path d="M10 35c12 0 40 1 46-4 3-6 6-8 8-8s5 3 8 8c8 4 36 4 50 4M52 36l12 8 12-8" />
              <path d="M52 36c4-7 9-13 12-13s8 6 12 13l-12 5z" fill="#4583b0" />
              <circle cx="22" cy="33" r="6" fill="#4682b0" /><circle cx="106" cy="34" r="7" fill="#4682b0" />
              <path d="M18 33c1 4 5 4 5 1M106 36c2 4 6 3 5-1" stroke="#b6dff8" strokeWidth="2" />
              <path d="M40 40l-2 14h20M64 44v14M72 46l16 8 2-12M2 54l40 8M5 56v12M9 57v12M13 58v12M17 59v12M130 54l-30 10M124 57v14M118 59v12M112 61v12M50 42l4 12M58 44v10M78 44l-3 10" opacity=".6" />
              <path d="M26 72l3-16 6 14M74 60l7-3v16l-9 4" opacity=".8" />
            </svg>
            <LogoText>AeroJoy</LogoText>
          </Logo>

          <Axis>
            <svg width="70" height="70" viewBox="0 0 70 70" fill="none" aria-label="Axes">
              <path d="M2 1h8L2 9h8" stroke="#2222dd" />
              <path d="M7 60V26" stroke="#0808c8" strokeWidth="4" />
              <path d="M7 14l4 15H3z" fill="#0808c8" />
              <path d="M8 60h32" stroke="#14b014" strokeWidth="4" />
              <path d="M52 60l-15-4v8z" fill="#10c010" />
              <path d="M58 55l4 5 4-5M62 60v5" stroke="#18e038" strokeWidth="1.2" />
              <path d="M3 56h8v8H3z" fill="#d01414" stroke="#8a1010" />
            </svg>
          </Axis>

          <Recorder>
            <RecordLeft><Pause aria-label="Pause"><i /><i /></Pause></RecordLeft>
            <RecordInfo>
              <RecordLabel>Recording...</RecordLabel>
              <RecordTime>00:11:28</RecordTime>
            </RecordInfo>
            <svg width="205" height="52" viewBox="0 0 205 52" fill="none" aria-hidden="true">
              <path d="M15.500 15v23M19.500 15v23M23.500 15v23M27.500 15v23M31.500 15v23" stroke="#d3d7d3" />
              <path d="M56 31l59-11v12H56z" fill="#dfecf2" />
              <path d="M55 33h60" stroke="#1989c6" strokeWidth="2" />
              <path d="M115 28v10" stroke="#1989c6" strokeWidth="2" />
              <circle cx="139" cy="24" r="9.500" stroke="#3f4340" />
              <circle cx="139" cy="24" r="4.500" fill="#2c2f2d" />
              <circle cx="138" cy="22" r="1" fill="#aaa" />
              <path d="M132 37c4 2 9 2 13 0M146 35h6M149 32v6" stroke="#4c504d" />
              <path d="M167 37l2-8 13-12 6 6-13 12z" fill="#2e3130" />
              <path d="M168 36l1-5 4 4zM181 18l3-2 5 5-3 3z" fill="#d5d9d5" stroke="#444" />
            </svg>
          </Recorder>
        </Canvas>
      </Work>

      <Mark>AeroJoy</Mark>
      <Mark $right>jjoyson4@gmail.com</Mark>
    </Screen>
  );
}
